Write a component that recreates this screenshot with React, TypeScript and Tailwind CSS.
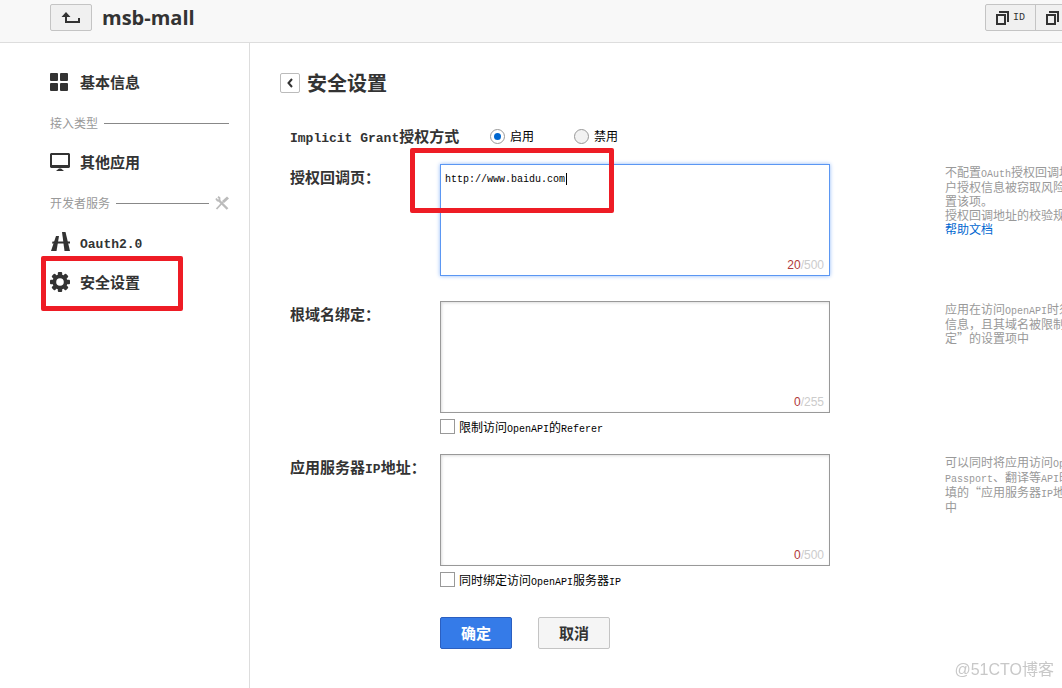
import { type ReactNode } from 'react';
import clsx from 'clsx';

// Latin runs are set in a half-width face next to the full-width Chinese glyphs
function Mixed({ children, large = false }: { children: string; large?: boolean }) {
  return children.split(/([\x20-\x7e]+)/).map((part, i) =>
    i % 2 === 1 ? (
      <span
        key={i}
        className={clsx("font-['Liberation_Mono',monospace] leading-none", large ? 'text-[13px]' : 'text-[10px]')}
      >
        {part}
      </span>
    ) : (
      part
    ),
  );
}

function BackIcon() {
  return (
    <svg className="h-3 w-5" viewBox="0 0 20 12" fill="#333">
      <path d="M5 0 9.5 5H6v4h11V6h2v5H4V5H.5z" />
    </svg>
  );
}

function CopyIcon() {
  return (
    <svg className="h-3.5 w-[13px] shrink-0" viewBox="0 0 13 14" fill="#333">
      <path d="M3 0h10v11h-2V2H3z" />
      <path fillRule="evenodd" d="M0 3h10v11H0zM2 5v7h6V5z" />
    </svg>
  );
}

function GridIcon() {
  return (
    <svg className="h-[18px] w-5" viewBox="0 0 20 18" fill="#333">
      <rect width="8" height="8" rx="1" />
      <rect x="10" width="8" height="8" rx="1" />
      <rect y="10" width="8" height="8" rx="1" />
      <rect x="10" y="10" width="8" height="8" rx="1" />
    </svg>
  );
}

function MonitorIcon() {
  return (
    <svg className="h-[18px] w-5" viewBox="0 0 20 18" fill="#333">
      <path fillRule="evenodd" d="M1 0h18l1 1v13l-1 1H1l-1-1V1zM2 2v10h16V2z" />
      <path d="M9 15.500h2l3 2.500H6z" />
    </svg>
  );
}

function RoadIcon() {
  return (
    <svg className="size-5" viewBox="0 0 20 20" fill="#333">
      <path d="M6 4h3L6.500 19H1z" />
      <path d="M12 0h3.500L20 19h-5.500z" />
      <path d="M2.500 9.500H20l1 2H2z" />
    </svg>
  );
}

function GearIcon() {
  return (
    <svg className="size-5" viewBox="0 0 20 20">
      <g fill="#333">
        <circle cx="10" cy="10" r="7.500" />
        {[0, 45, 90, 135].map((angle) => (
          <rect key={angle} x="7.800" width="4.400" height="20" rx="1" transform={`rotate(${angle} 10 10)`} />
        ))}
      </g>
      <circle cx="10" cy="10" r="3.800" fill="#fff" />
    </svg>
  );
}

function ToolsIcon() {
  return (
    <svg className="size-3.5" viewBox="0 0 14 14" fill="none" stroke="#bbb">
      <path d="M4 4.500 12.500 13" strokeWidth="2.400" />
      <path d="M1 2.500 2.500 4.500 4.500 4.500 4.500 2 3 .8" strokeWidth="1.800" />
      <path d="M13 1.500 8 6" strokeWidth="3" />
      <path d="M8 6 1.500 13" strokeWidth="1.800" />
    </svg>
  );
}

function NavItem({ icon, label, marked = false }: { icon: ReactNode; label: string; marked?: boolean }) {
  return (
    <a href="#" className="relative flex h-10 items-center gap-2.5 pb-0.5 text-[15px] font-bold">
      {icon}
      <span>
        <Mixed large>{label}</Mixed>
      </span>
      {marked && (
        <span className="absolute -top-[7px] -left-[9px] h-[55px] w-[142px] rounded-xs border-5 border-[#ee1c25]" />
      )}
    </a>
  );
}

function NavGroup({ label, icon }: { label: string; icon?: ReactNode }) {
  return (
    <div className="flex h-10 items-center gap-1.5 text-[#999]">
      <span>{label}</span>
      <span className="h-px flex-1 bg-[#888]" />
      {icon}
    </div>
  );
}

interface FieldProps {
  id: string;
  label: string;
  value?: string;
  limit: number;
  focused?: boolean;
  check?: string;
  help: string[];
  link?: string;
}

function Field({ id, label, value = '', limit, focused = false, check, help, link }: FieldProps) {
  return (
    <div className="grid grid-cols-[150px_390px_auto]">
      <label htmlFor={id} className="text-[15px] leading-[26px] font-bold">
        <Mixed large>{label}</Mixed>
      </label>
      <div>
        <div className="relative">
          <textarea
            id={id}
            defaultValue={value}
            className={clsx(
              "block h-28 w-full resize-none border bg-white px-1 py-2 font-['Liberation_Mono',monospace] text-[10px] leading-[14px] text-black outline-none",
              focused
                ? 'border-[#5b97f3] shadow-[0_0_4px_#8fb8f8]'
                : 'border-[#999] shadow-[inset_1px_1px_3px_#ddd]',
            )}
          />
          <span className="absolute right-1.5 bottom-1 font-['Liberation_Sans',sans-serif] leading-[14px] text-[#ccc]">
            <span className="text-[#b03a3a]">{value.length}</span>/{limit}
          </span>
          {focused && (
            <>
              <span className="absolute top-[9px] left-[126px] h-3 w-px bg-black" />
              <span className="absolute -top-4 -left-[30px] h-[65px] w-[204px] rounded-xs border-5 border-[#ee1c25]" />
            </>
          )}
        </div>
        {check && (
          <label className="mt-1.5 flex h-[15px] items-center gap-1 text-black">
            <input
              type="checkbox"
              className="size-[15px] appearance-none border border-[#999] bg-white checked:bg-[#0067d0]"
            />
            <span>
              <Mixed>{check}</Mixed>
            </span>
          </label>
        )}
      </div>
      <div className="ml-[115px] pt-px leading-[14px] whitespace-nowrap text-[#999]">
        {help.map((line) => (
          <p key={line}>
            <Mixed>{line}</Mixed>
          </p>
        ))}
        {link && (
          <a href="#" className="block text-[#0067d0]">
            {link}
          </a>
        )}
      </div>
    </div>
  );
}

function GrantRadio({ label, defaultChecked }: { label: string; defaultChecked?: boolean }) {
  return (
    <label className="flex items-center gap-[5px] text-black">
      <input
        type="radio"
        name="grant"
        defaultChecked={defaultChecked}
        className="grid size-[15px] appearance-none place-items-center rounded-full border border-[#999] bg-[#f2f2f2] before:size-[7px] before:rounded-full checked:bg-white checked:before:bg-[#0067d0]"
      />
      {label}
    </label>
  );
}

export default function App() {
  return (
    <div
      lang="zh-CN"
      className="flex min-h-screen flex-col overflow-hidden bg-white font-['Noto_Sans_CJK_SC',sans-serif] text-xs text-[#333]"
    >
      <header className="flex h-[43px] items-start border-b border-[#ddd] bg-[#f8f8f8] pt-1 pl-[50px]">
        <button
          aria-label="返回"
          className="flex h-[27px] w-[42px] items-center justify-center rounded-xs border border-[#c4c4c4] bg-[#f0f0f0]"
        >
          <BackIcon />
        </button>
        <h1 className="ml-2.5 font-['Open_Sans',sans-serif] text-xl leading-[27px] font-bold">msb-mall</h1>
        <div className="-mr-[25px] ml-auto flex h-[27px] rounded-xs border border-[#c4c4c4] bg-[#f0f0f0]">
          <button className="flex w-[50px] items-center gap-1 border-r border-[#c4c4c4] pl-2.5">
            <CopyIcon />
            <Mixed>ID</Mixed>
          </button>
          <button aria-label="复制" className="flex w-[50px] items-center pl-2.5">
            <CopyIcon />
          </button>
        </div>
      </header>

      <div className="flex flex-1">
        <nav className="w-[250px] shrink-0 border-r border-[#ddd] pt-5 pr-5 pl-[50px]">
          <NavItem icon={<GridIcon />} label="基本信息" />
          <NavGroup label="接入类型" />
          <NavItem icon={<MonitorIcon />} label="其他应用" />
          <NavGroup label="开发者服务" icon={<ToolsIcon />} />
          <NavItem icon={<RoadIcon />} label="Oauth2.0" />
          <NavItem icon={<GearIcon />} label="安全设置" marked />
        </nav>

        <main className="min-w-0 flex-1 pt-[30px] pl-[30px]">
          <div className="flex h-5 items-center gap-[7px]">
            <button
              aria-label="返回"
              className="flex size-5 items-center justify-center rounded-xs border border-[#bbb] bg-white"
            >
              <svg className="h-2.5 w-1.5" viewBox="0 0 6 10" fill="none" stroke="#333" strokeWidth="2">
                <path d="M5 1 1.500 5 5 9" />
              </svg>
            </button>
            <h2 className="text-xl leading-5 font-bold">安全设置</h2>
          </div>

          <form className="mt-[33px] pl-2.5">
            <div role="radiogroup" aria-labelledby="grant-label" className="flex h-5 items-center">
              <span id="grant-label" className="w-[200px] text-[15px] font-bold">
                <Mixed large>Implicit Grant授权方式</Mixed>
              </span>
              <div className="flex gap-10">
                <GrantRadio label="启用" defaultChecked />
                <GrantRadio label="禁用" />
              </div>
            </div>

            <div className="mt-[18px] mb-[25px]">
              <Field
                id="callback"
                label="授权回调页："
                value="http://www.baidu.com"
                limit={500}
                focused
                help={['不配置OAuth授权回调地', '户授权信息被窃取风险', '置该项。', '授权回调地址的校验规']}
                link="帮助文档"
              />
            </div>
            <div className="mb-5">
              <Field
                id="domain"
                label="根域名绑定："
                limit={255}
                check="限制访问OpenAPI的Referer"
                help={['应用在访问OpenAPI时须', '信息，且其域名被限制', '定”的设置项中']}
              />
            </div>
            <Field
              id="server-ip"
              label="应用服务器IP地址："
              limit={500}
              check="同时绑定访问OpenAPI服务器IP"
              help={['可以同时将应用访问Open', 'Passport、翻译等API时', '填的“应用服务器IP地', '中']}
            />

            <div className="mt-[30px] ml-[150px] flex gap-[26px] text-[15px] font-bold">
              <button type="button" className="h-8 w-[72px] rounded-xs border border-[#2b5fc0] bg-[#357be8] text-white">
                确定
              </button>
              <button type="button" className="h-8 w-[72px] rounded-xs border border-[#c4c4c4] bg-[#f5f5f5]">
                取消
              </button>
            </div>
          </form>
        </main>
      </div>

      <div className="fixed right-2 bottom-1.5 font-['Liberation_Sans','Noto_Sans_CJK_SC',sans-serif] text-base leading-6 text-[#c8c8c8]">
        @51CTO博客
      </div>
    </div>
  );
}
